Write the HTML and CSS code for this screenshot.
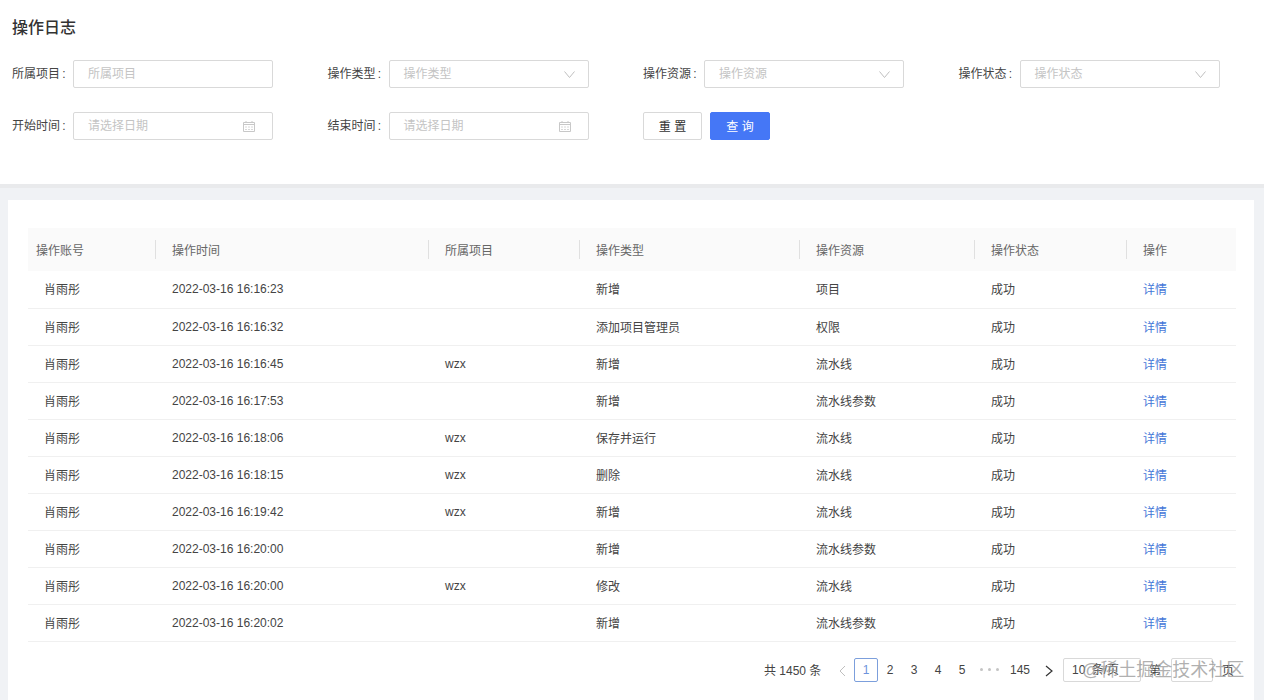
FILE: index.html
```html
<!DOCTYPE html>
<html lang="zh">
<head>
<meta charset="utf-8">
<title>操作日志</title>
<link rel="stylesheet" href="styles.css">
</head>
<body>
<section class="filters">
  <h1 class="title">操作日志</h1>
  <form class="filter-grid">
    <div class="field"><label class="label">所属项目 :</label><div class="control"><span class="ph">所属项目</span></div></div>
    <div class="field"><label class="label">操作类型 :</label><div class="control"><span class="ph">操作类型</span><svg class="icon" viewBox="0 0 11 7"><path d="M.5.5l5 6 5-6"/></svg></div></div>
    <div class="field"><label class="label">操作资源 :</label><div class="control"><span class="ph">操作资源</span><svg class="icon" viewBox="0 0 11 7"><path d="M.5.5l5 6 5-6"/></svg></div></div>
    <div class="field"><label class="label">操作状态 :</label><div class="control"><span class="ph">操作状态</span><svg class="icon" viewBox="0 0 11 7"><path d="M.5.5l5 6 5-6"/></svg></div></div>
    <div class="field"><label class="label">开始时间 :</label><div class="control"><span class="ph">请选择日期</span><svg class="cal" viewBox="0 0 12 11"><path d="M.5 1.5h11v9H.5zM.5 3.5h11M3 0v2M9 0v2"/><path class="cal-dots" d="M2 6h2M5 6h2M8 6h2M2 8.5h2M5 8.5h2M8 8.5h2"/></svg></div></div>
    <div class="field"><label class="label">结束时间 :</label><div class="control"><span class="ph">请选择日期</span><svg class="cal" viewBox="0 0 12 11"><path d="M.5 1.5h11v9H.5zM.5 3.5h11M3 0v2M9 0v2"/><path class="cal-dots" d="M2 6h2M5 6h2M8 6h2M2 8.5h2M5 8.5h2M8 8.5h2"/></svg></div></div>
    <div class="actions"><button type="button" class="btn">重 置</button><button type="button" class="btn primary">查 询</button></div>
  </form>
</section>
<main class="content">
  <table class="log">
    <colgroup><col class="c1"><col class="c2"><col class="c3"><col class="c4"><col class="c5"><col class="c6"><col class="c7"></colgroup>
    <thead><tr><th class="first">操作账号</th><th>操作时间</th><th>所属项目</th><th>操作类型</th><th>操作资源</th><th>操作状态</th><th>操作</th></tr></thead>
    <tbody>
      <tr><td>肖雨彤</td><td class="num">2022-03-16 16:16:23</td><td></td><td>新增</td><td>项目</td><td>成功</td><td><a class="link">详情</a></td></tr>
      <tr><td>肖雨彤</td><td class="num">2022-03-16 16:16:32</td><td></td><td>添加项目管理员</td><td>权限</td><td>成功</td><td><a class="link">详情</a></td></tr>
      <tr><td>肖雨彤</td><td class="num">2022-03-16 16:16:45</td><td class="num">wzx</td><td>新增</td><td>流水线</td><td>成功</td><td><a class="link">详情</a></td></tr>
      <tr><td>肖雨彤</td><td class="num">2022-03-16 16:17:53</td><td></td><td>新增</td><td>流水线参数</td><td>成功</td><td><a class="link">详情</a></td></tr>
      <tr><td>肖雨彤</td><td class="num">2022-03-16 16:18:06</td><td class="num">wzx</td><td>保存并运行</td><td>流水线</td><td>成功</td><td><a class="link">详情</a></td></tr>
      <tr><td>肖雨彤</td><td class="num">2022-03-16 16:18:15</td><td class="num">wzx</td><td>删除</td><td>流水线</td><td>成功</td><td><a class="link">详情</a></td></tr>
      <tr><td>肖雨彤</td><td class="num">2022-03-16 16:19:42</td><td class="num">wzx</td><td>新增</td><td>流水线</td><td>成功</td><td><a class="link">详情</a></td></tr>
      <tr><td>肖雨彤</td><td class="num">2022-03-16 16:20:00</td><td></td><td>新增</td><td>流水线参数</td><td>成功</td><td><a class="link">详情</a></td></tr>
      <tr><td>肖雨彤</td><td class="num">2022-03-16 16:20:00</td><td class="num">wzx</td><td>修改</td><td>流水线</td><td>成功</td><td><a class="link">详情</a></td></tr>
      <tr><td>肖雨彤</td><td class="num">2022-03-16 16:20:02</td><td></td><td>新增</td><td>流水线参数</td><td>成功</td><td><a class="link">详情</a></td></tr>
    </tbody>
  </table>
  <nav class="pager">
    <span class="total">共 1450 条</span>
    <svg class="arrow prev" viewBox="0 0 8 12"><path d="M7 1L2 6l5 5"/></svg>
    <span class="pg current">1</span><span class="pg">2</span><span class="pg">3</span><span class="pg">4</span><span class="pg">5</span><span class="dots"><i></i><i></i><i></i></span><span class="pg wide">145</span>
    <svg class="arrow next" viewBox="0 0 8 12"><path d="M1 1l6 5-6 5"/></svg>
    <span class="size">10 条/页</span><span class="jump">第</span><span class="goto"></span><span class="unit">页</span>
  </nav>
</main>
<div class="mark">@稀土掘金技术社区</div>
</body>
</html>
```
FILE: styles.css
```css
* { box-sizing: border-box; }
html, body { margin: 0; height: 700px; overflow: hidden; }
body { background: #f0f2f5; font-family: "Liberation Sans", "Noto Sans CJK SC", sans-serif; font-size: 12px; color: #444; position: relative; }
.filters { height: 188px; background: #fff; border-bottom: 4px solid #e9eaec; padding: 18px 12px 0; }
.title { margin: 0; font-size: 16px; line-height: 20px; font-weight: 500; color: #333; }
.filter-grid { display: grid; grid-template-columns: repeat(4, 315.5px); row-gap: 24px; margin-top: 22px; }
.field { display: flex; align-items: center; height: 28px; }
.label { width: 61px; flex: none; color: #444; white-space: nowrap; padding-bottom: 3px; word-spacing: -1px; }
.control { width: 200px; height: 28px; border: 1px solid #d9d9d9; border-radius: 2px; padding: 0 14px; display: flex; align-items: center; justify-content: space-between; }
.ph { color: #c4c4c4; padding-bottom: 3px; }
.icon { width: 11px; height: 7px; margin-right: -1px; fill: none; stroke: #bfbfbf; stroke-width: 1; }
.cal { width: 12px; height: 11px; margin-right: 3px; fill: none; stroke: #c8c8c8; stroke-width: 1; }
.cal-dots { stroke: #d8d8d8; }
.actions { display: flex; gap: 8px; }
.btn { height: 28px; width: 59px; padding: 0 0 2px; border: 1px solid #d9d9d9; border-radius: 2px; background: #fff; color: #333; font: inherit; }
.btn.primary { width: 60px; background: #4577f6; border-color: #4577f6; color: #fff; }
.content { margin: 12px 10px 0 8px; height: 500px; background: #fff; padding: 28px 18px 0 20px; }
.log { width: 1208px; table-layout: fixed; border-collapse: collapse; }
.c1 { width: 128px; } .c2 { width: 273px; } .c3 { width: 151px; } .c4 { width: 220px; } .c5 { width: 175px; } .c6 { width: 152px; } .c7 { width: 109px; }
.log th { height: 43px; background: #fafafa; font-weight: 400; text-align: left; padding: 0 16px; color: #666; position: relative; }
.log th.first { padding-left: 8px; }
.log th + th::before { content: ""; position: absolute; left: -1px; top: 12px; height: 19px; width: 1px; background: #e0e0e0; }
.log td { height: 37px; padding: 0 16px 1px; border-bottom: 1px solid #f0f0f0; color: #444; white-space: nowrap; }
.log td.num { padding: 0 16px; }
.link { color: #4577d8; }
.pager { display: flex; align-items: center; height: 24px; margin-top: 16px; padding-left: 736px; color: #444; }
.total { width: 58px; flex: none; white-space: nowrap; }
.arrow { width: 8px; height: 12px; fill: none; flex: none; }
.arrow.prev { stroke: #bfbfbf; stroke-width: 1; margin: 2px 8px 0 16px; }
.arrow.next { stroke: #333; stroke-width: 1.2; margin: 2px 0 0 9px; }
.pg { width: 24px; height: 24px; line-height: 22px; text-align: center; border: 1px solid transparent; flex: none; }
.pg.wide { width: 32px; }
.pg.current { border-color: #7c9fdc; border-radius: 2px; color: #6d93dc; }
.dots { width: 30px; flex: none; display: flex; justify-content: center; gap: 5px; }
.dots i { width: 3px; height: 3px; border-radius: 50%; background: #c4c4c4; }
.size { width: 78px; height: 24px; margin-left: 10px; border: 1px solid #d9d9d9; border-radius: 2px; padding: 0 8px; line-height: 22px; white-space: nowrap; flex: none; word-spacing: 3px; }
.jump { margin-left: 8px; width: 22px; flex: none; }
.goto { width: 42px; height: 24px; border: 1px solid #d9d9d9; border-radius: 2px; flex: none; }
.unit { margin-left: 9px; flex: none; }
.mark { position: absolute; left: 1082px; top: 658px; font-size: 18px; line-height: 24px; color: rgba(150,150,150,.75); white-space: nowrap; }
```
